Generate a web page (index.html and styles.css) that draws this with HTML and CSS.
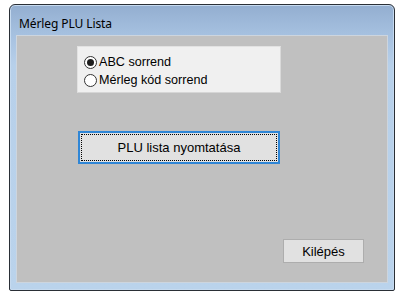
FILE: index.html
```html
<!DOCTYPE html>
<html lang="hu">
<head>
<meta charset="utf-8">
<title>Mérleg PLU Lista</title>
<link rel="stylesheet" href="styles.css">
</head>
<body>
<div class="window">
  <div class="titlebar"><span class="title">Mérleg PLU Lista</span></div>
  <div class="client">
    <div class="group">
      <label class="radio"><span class="dot checked"></span><span>ABC sorrend</span></label>
      <label class="radio"><span class="dot"></span><span>Mérleg kód sorrend</span></label>
    </div>
    <button class="btn primary"><span class="focus">PLU lista nyomtatása</span></button>
    <button class="btn exit">Kilépés</button>
  </div>
</div>
</body>
</html>
```

FILE: styles.css
```css
html, body {
  margin: 0;
  padding: 0;
  background: #ffffff;
  width: 405px;
  height: 295px;
  overflow: hidden;
}
.window {
  margin: 4px 0 0 9px;
  width: 384px;
  height: 285px;
  border: 1px solid #2a2f36;
  border-radius: 6px 6px 2px 2px;
  background: linear-gradient(to bottom, #93aed0 0px, #a6c1e0 30px, #b7d0ea 60px, #bad3ec 100%);
  display: flex;
  flex-direction: column;
  box-shadow: inset 0 0 0 1px #c6daef;
}
.titlebar {
  height: 30px;
  display: flex;
  align-items: center;
  padding-left: 9px;
  flex: none;
}
.title {
  font-family: "Noto Sans", "Open Sans", sans-serif;
  font-size: 12px;
  color: #000;
  margin-top: 6px;
  letter-spacing: -0.1px;
}
.client {
  flex: 1;
  margin: 0 6px 7px 6px;
  background: #c0c0c0;
  border: 1px solid #cdd5de;
  display: flex;
  flex-direction: column;
  align-items: flex-start;
  padding-top: 10px;
  font-family: "Liberation Sans", Arial, sans-serif;
  font-size: 12.6px;
  color: #000;
}
.group {
  margin-left: 60px;
  width: 202px;
  height: 39px;
  background: #f0f0f0;
  border: 1px solid #e2e2e2;
  border-right-color: #dadada;
  border-bottom-color: #d6d6d6;
  display: flex;
  flex-direction: column;
  padding-top: 6px;
}
.radio {
  display: flex;
  align-items: center;
  height: 18px;
  padding-left: 6px;
  gap: 2px;
}
.dot {
  width: 11px;
  height: 11px;
  border: 1px solid #333;
  border-radius: 50%;
  background: #fff;
  display: flex;
  align-items: center;
  justify-content: center;
}
.dot.checked::after {
  content: "";
  width: 7px;
  height: 7px;
  border-radius: 50%;
  background: #1e1e1e;
}
.btn {
  font-family: "Liberation Sans", Arial, sans-serif;
  font-size: 13px;
  color: #000;
  background: #e1e1e1;
  padding: 0;
  margin: 0;
}
.primary {
  margin-top: 38px;
  margin-left: 61px;
  width: 202px;
  height: 33px;
  border: 2px solid #2f86d6;
  padding: 1px;
  display: flex;
}
.focus {
  flex: 1;
  border: 1px dotted #000;
  display: flex;
  align-items: center;
  justify-content: center;
}
.exit {
  margin-top: 75px;
  margin-left: 266px;
  width: 81px;
  height: 24px;
  border: 1px solid #adadad;
}
```
